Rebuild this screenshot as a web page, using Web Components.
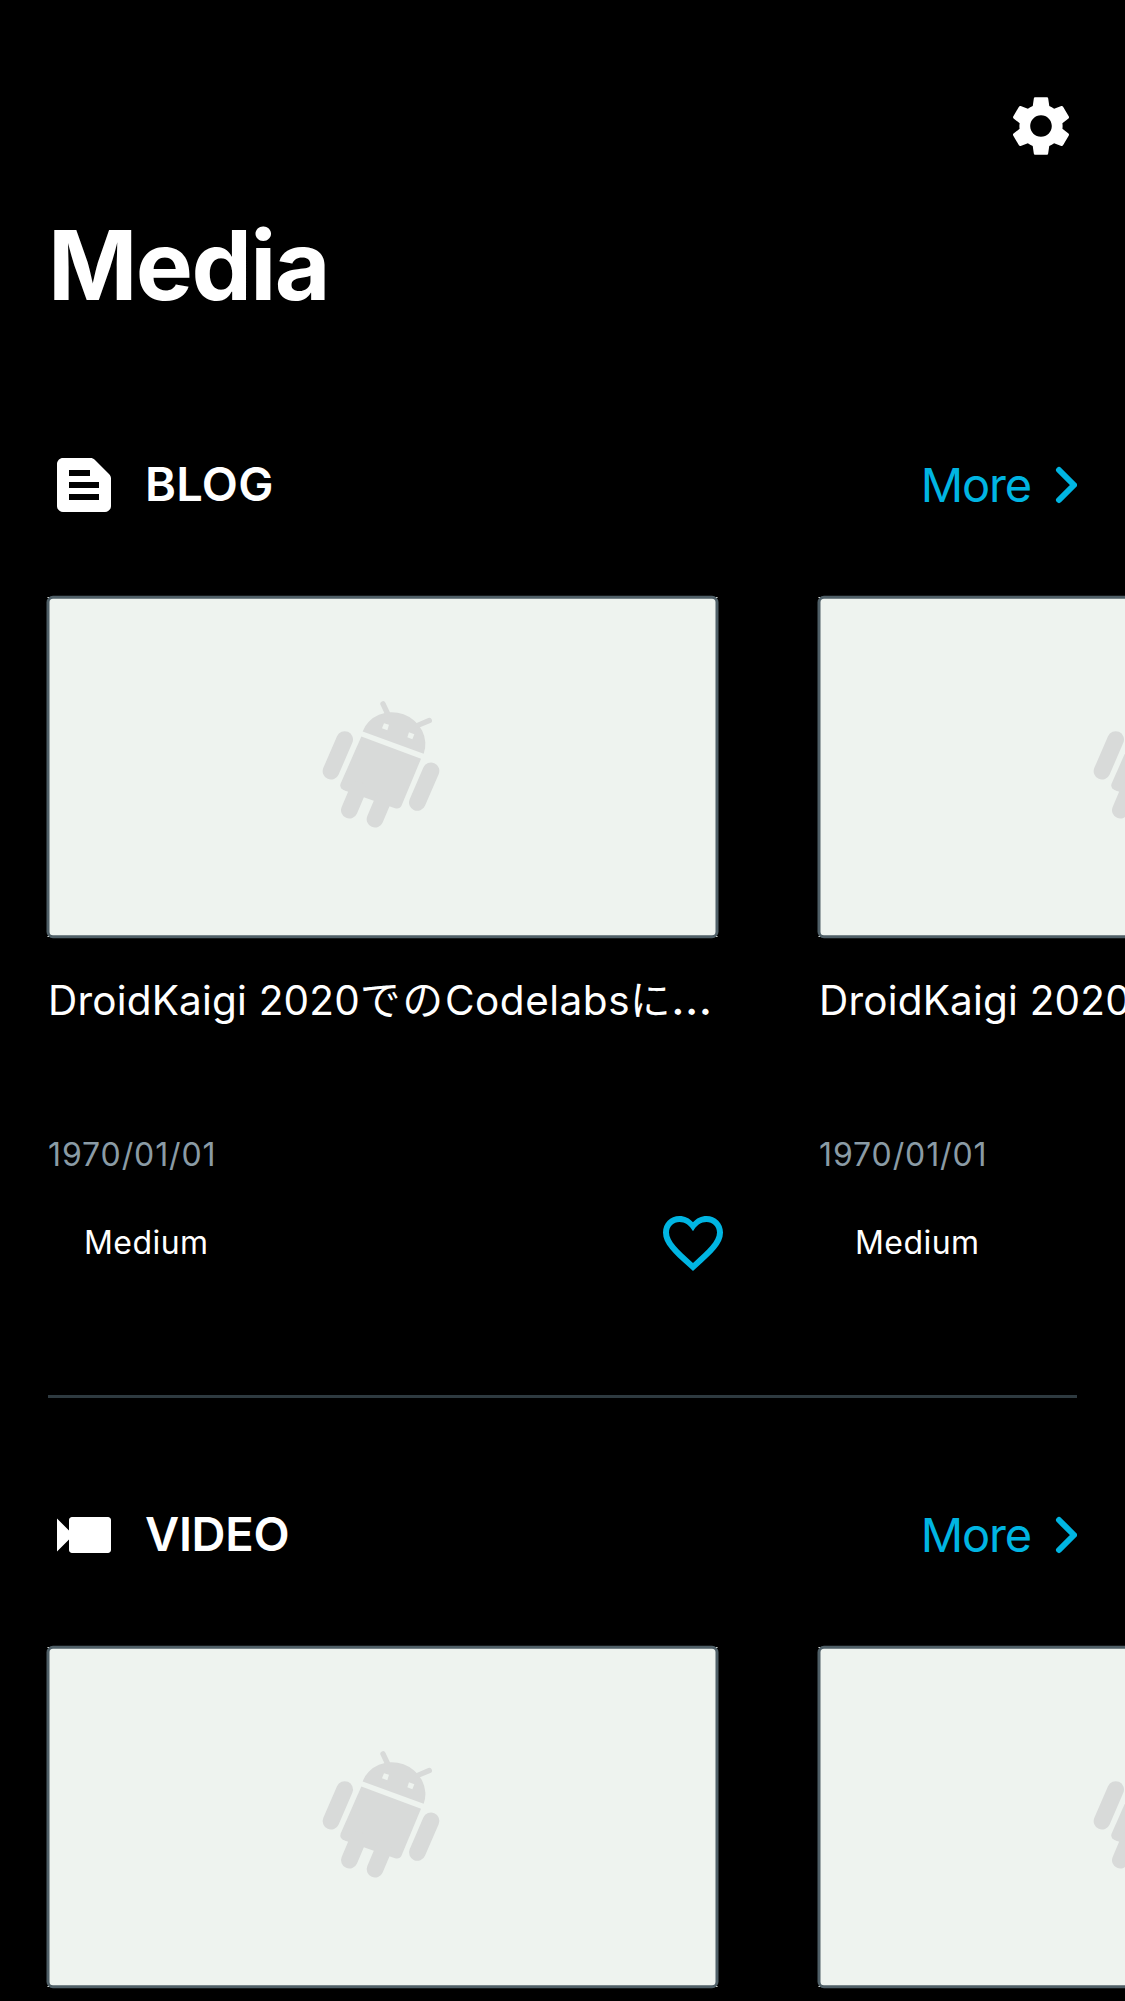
<!DOCTYPE html>
<html lang="ja">
<head>
<meta charset="utf-8">
<title>Media</title>
<style>
html,body{margin:0;background:#000}
body{width:1125px;height:2001px;overflow:hidden;font-family:Inter,"Noto Sans CJK JP",sans-serif;color:#fff}
</style>
</head>
<body>
<media-page></media-page>
<script>
const define = (name, html) => {
  const template = document.createElement('template');
  template.innerHTML = html;
  customElements.define(name, class extends HTMLElement {
    constructor() {
      super();
      this.attachShadow({mode: 'open'}).append(template.content.cloneNode(true));
    }
  });
};

const icons = {
  settings: '<path d="M19.14 12.94c.04-.3.06-.61.06-.94 0-.32-.02-.64-.07-.94l2.03-1.58c.18-.14.23-.41.12-.61l-1.92-3.32c-.12-.22-.37-.29-.59-.22l-2.39.96c-.5-.38-1.03-.7-1.62-.94l-.36-2.54c-.04-.24-.24-.41-.48-.41h-3.84c-.24 0-.43.17-.47.41l-.36 2.54c-.59.24-1.13.57-1.62.94l-2.39-.96c-.22-.08-.47 0-.59.22L2.74 8.87c-.12.21-.08.47.12.61l2.03 1.58c-.05.3-.09.63-.09.94s.02.64.07.94l-2.03 1.58c-.18.14-.23.41-.12.61l1.92 3.32c.12.22.37.29.59.22l2.39-.96c.5.38 1.03.7 1.62.94l.36 2.54c.05.24.24.41.48.41h3.84c.24 0 .44-.17.47-.41l.36-2.54c.59-.24 1.13-.56 1.62-.94l2.39.96c.22.08.47 0 .59-.22l1.92-3.32c.12-.22.07-.47-.12-.61l-2.01-1.58zM12 15.6c-1.98 0-3.6-1.62-3.6-3.6s1.62-3.6 3.6-3.6 3.6 1.62 3.6 3.6-1.62 3.6-3.6 3.6z"/>',
  blog: '<path d="M20.41 8.41l-4.83-4.83C15.21 3.21 14.7 3 14.17 3H5c-1.1 0-2 .9-2 2v14c0 1.1.9 2 2 2h14c1.1 0 2-.9 2-2V9.83c0-.53-.21-1.04-.59-1.42zM7 7h7v2H7V7zm10 10H7v-2h10v2zm0-4H7v-2h10v2z"/>',
  video: '<path d="M7 10.5V7c0-.55.45-1 1-1h12c.55 0 1 .45 1 1v10c0 .55-.45 1-1 1H8c-.55 0-1-.45-1-1v-3.5l-4 4v-11z"/>',
  heart: '<path d="M16.5 3c-1.74 0-3.41.81-4.5 2.09C10.91 3.81 9.24 3 7.5 3 4.42 3 2 5.42 2 8.5c0 3.78 3.4 6.86 8.55 11.54L12 21.35l1.45-1.32C18.6 15.36 22 12.28 22 8.5 22 5.42 19.58 3 16.5 3zM12.1 18.55l-.1.1-.1-.1C7.14 14.24 4 11.39 4 8.5 4 6.5 5.5 5 7.5 5c1.74 0 3.41 1.05 4.5 3.1C13.09 6.05 14.76 5 16.5 5c2 0 3.5 1.5 3.5 3.5 0 2.89-3.14 5.74-7.9 10.05z"/>'
};
customElements.define('media-icon', class extends HTMLElement {
  connectedCallback() {
    if (this.shadowRoot) return;
    this.attachShadow({mode: 'open'}).innerHTML =
      `<style>:host{display:block;width:72px;height:72px;flex:none}svg{display:block}</style>
       <svg width="72" height="72" viewBox="0 0 24 24" fill="currentColor">${icons[this.getAttribute('name')]}</svg>`;
  }
});

define('droid-thumb', `
<style>:host{display:block;width:669px;height:339px}svg{display:block;overflow:visible}</style>
<svg width="669" height="339" viewBox="0 0 669 339">
  <path fill="#eef3ef" d="M-.5 0h2v1h-2zM667.5 0h2v1h-2zM-.5 339h2v1h-2zM667.5 339h2v1h-2z"/>
  <rect x="0" y="0.3" width="669" height="339.4" rx="5" fill="#eef3ef" stroke="#4f5f67" stroke-width="3"/>
  <g transform="translate(252 83.5) scale(.33333)" fill="#d8dad9" stroke="#d8dad9" stroke-linecap="round">
    <path stroke="none" d="M188 153A97 90 20.1 0 1 371 220Z"/>
    <path stroke="none" d="M184 168L363 235L305 374Q299 387 285 383L134 330Q117 324 122 309Z"/>
    <path stroke-width="16" d="M249 70L264 102M388 120L355 134"/>
    <path stroke-width="50" d="M134 177L93 272M393 271L352 366M148 389L174 328M225 416L251 355"/>
    <path stroke="none" fill="#eef3ef" d="M252 128L267 133L262 149L246 143ZM327 155L343 161L337 176L322 170Z"/>
  </g>
</svg>`);

define('media-card', `
<style>
:host{display:flex;flex-direction:column;width:669px;flex:none}
.title{margin-top:35px;line-height:60px;height:60px;font-size:40.5px;letter-spacing:.2px;white-space:nowrap}
.date{margin-top:104px;line-height:40px;font-size:32px;letter-spacing:.9px;color:#8a9ba5}
.foot{margin-top:32px;margin-right:-12px;display:flex;justify-content:space-between;align-items:center;font-size:32px}
.source{padding-left:36px;letter-spacing:.45px;margin-top:-1px}
media-icon{color:#00b5e2}
</style>
<droid-thumb></droid-thumb>
<div class="title"><slot></slot></div>
<div class="date"><slot name="date"></slot></div>
<div class="foot"><span class="source"><slot name="source"></slot></span><media-icon name="heart"></media-icon></div>`);

define('section-header', `
<style>
:host{display:flex;align-items:center;height:72px;padding:0 48px;font-size:47px;line-height:70px}
.name{margin-left:25px;margin-top:-2px;font-weight:600;flex:1}
.more{color:#00b5e2;display:flex;align-items:center}
.label{letter-spacing:-1.2px}
svg{display:block;margin-left:24px}
</style>
<slot name="icon"></slot><span class="name"><slot></slot></span>
<span class="more"><span class="label">More</span><svg width="22" height="38" viewBox="0 0 22 38" fill="none" stroke="currentColor" stroke-width="6" stroke-linecap="round" stroke-linejoin="round"><path d="M4 4L19 19L4 34"/></svg></span>`);

define('card-row', `<style>:host{display:flex;gap:102px;padding:76px 0 0 48px;overflow:hidden}</style><slot></slot>`);

define('media-page', `
<style>
:host{display:block;width:1125px;height:2001px;overflow:hidden;background:#000}
.bar{display:flex;justify-content:flex-end;padding:90px 48px 0}
h1{margin:45px 0 126px;padding-left:48px;font-size:96px;line-height:116px;font-weight:700;letter-spacing:-1.6px}
hr{border:0;height:3px;margin:116px 48px 101px;background:#2e3a40}
.kana{letter-spacing:2px}
.word{letter-spacing:.5px}
.dots{font-size:1.18em;line-height:0}
</style>
<div class="bar"><media-icon name="settings"></media-icon></div>
<h1><span>Media</span></h1>
<section-header><media-icon slot="icon" name="blog"></media-icon><span style="letter-spacing:.3px">BLOG</span></section-header>
<card-row>
  <media-card><span>DroidKaigi 2020<span class="kana">での</span><span class="word">Codelabsに</span><span class="dots">…</span></span><span slot="date">1970/01/01</span><span slot="source">Medium</span></media-card>
  <media-card><span>DroidKaigi 2020<span class="kana">での</span><span class="word">Codelabsに</span><span class="dots">…</span></span><span slot="date">1970/01/01</span><span slot="source">Medium</span></media-card>
</card-row>
<hr>
<section-header><media-icon slot="icon" name="video"></media-icon><span style="letter-spacing:-.3px">VIDEO</span></section-header>
<card-row>
  <media-card></media-card>
  <media-card></media-card>
</card-row>`);
</script>
</body>
</html>
